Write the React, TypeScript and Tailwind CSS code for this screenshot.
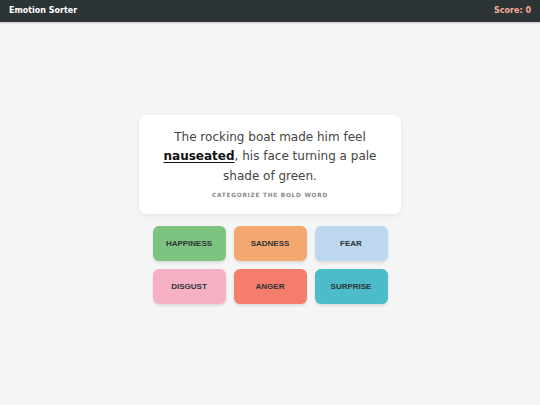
const choices = [
  { label: "HAPPINESS", bg: "bg-[#7dc481]" },
  { label: "SADNESS", bg: "bg-[#f4a76f]" },
  { label: "FEAR", bg: "bg-[#bdd8ee]" },
  { label: "DISGUST", bg: "bg-[#f5b0c4]" },
  { label: "ANGER", bg: "bg-[#f57d6b]" },
  { label: "SURPRISE", bg: "bg-[#4cbccb]" },
];

export default function App() {
  return (
    <div className="flex h-[405px] w-[540px] flex-col bg-[#f4f5f4] font-['DejaVu_Sans',sans-serif]">
      <header className="flex h-[22px] shrink-0 items-center justify-between bg-[#2d3436] px-[9px] shadow-[0_1px_2px_rgba(0,0,0,0.2)]">
        <span className="text-[8px] font-bold text-white">Emotion Sorter</span>
        <span className="text-[8px] font-bold text-[#f5ad98]">Score: 0</span>
      </header>

      <main className="flex flex-1 flex-col items-center justify-center pb-[8px]">
        <div className="w-[262px] rounded-[8px] bg-white px-[20px] pt-[13px] pb-[14px] text-center shadow-[0_2px_6px_rgba(0,0,0,0.06)]">
          <p className="text-[12px] leading-[19.5px] text-[#444]">
            The rocking boat made him feel{" "}
            <span className="font-bold text-[#111] underline decoration-[1px] underline-offset-[2px]">nauseated</span>, his face
            turning a pale shade of green.
          </p>
          <p className="mt-[5px] text-[5.8px] font-bold tracking-[0.13em] text-[#888]">CATEGORIZE THE BOLD WORD</p>
        </div>

        <div className="mt-[12px] grid grid-cols-[repeat(3,73px)] gap-[8px]">
          {choices.map((c) => (
            <button
              key={c.label}
              className={`flex h-[35px] items-center justify-center rounded-[6px] ${c.bg} font-['Liberation_Sans',sans-serif] text-[8px] font-bold text-[#2d3436] shadow-[0_2px_3px_rgba(0,0,0,0.1)]`}
            >
              {c.label}
            </button>
          ))}
        </div>
      </main>
    </div>
  );
}
